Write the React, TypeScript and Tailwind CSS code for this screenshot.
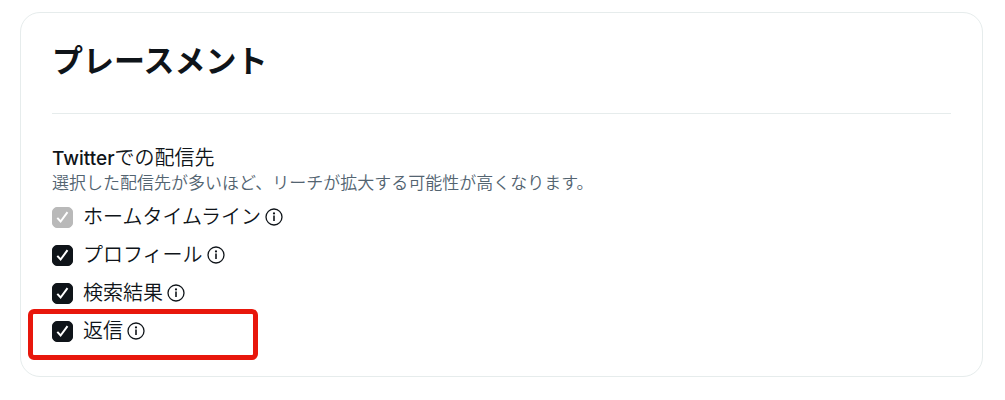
import { useState } from "react";

const placements = [
  { id: "home", label: "ホームタイムライン", locked: true, highlight: false },
  { id: "profile", label: "プロフィール", locked: false, highlight: false },
  { id: "search", label: "検索結果", locked: false, highlight: false },
  { id: "reply", label: "返信", locked: false, highlight: true },
];

function InfoIcon() {
  return (
    <svg viewBox="0 0 18 18" className="size-[18px]" fill="none" aria-hidden="true">
      <circle cx="9" cy="9" r="8" stroke="currentColor" strokeWidth="1.3" />
      <circle cx="9" cy="5.4" r="1.1" fill="currentColor" />
      <path d="M9 7.6v5.4" stroke="currentColor" strokeWidth="1.6" />
    </svg>
  );
}

export default function App() {
  const [checked, setChecked] = useState(["home", "profile", "search", "reply"]);

  const toggle = (id: string) =>
    setChecked((prev) => (prev.includes(id) ? prev.filter((p) => p !== id) : [...prev, id]));

  return (
    <main className="bg-white pt-3 pb-6 pl-5 pr-[22px] font-['Inter','Noto_Sans_CJK_JP',sans-serif] text-[#0f1419]">
      <section className="rounded-[20px] border border-[#e6ecec] px-[31px] py-6 pb-[31px]">
        <h1 className="border-b border-[#e6ecec] pb-7 text-[31px] leading-12 font-bold">プレースメント</h1>

        <div role="group" aria-labelledby="placement-title" className="pt-8">
          <h2 id="placement-title" className="text-xl leading-6 font-[350]">
            <span className="text-[19px] font-medium">Twitter</span>での配信先
          </h2>
          <p className="text-[17px] leading-6 font-[350] text-[#536471]">
            選択した配信先が多いほど、リーチが拡大する可能性が高くなります。
          </p>

          <ul className="mt-2 flex flex-col gap-2.5">
            {placements.map(({ id, label, locked, highlight }) => (
              <li key={id} className="relative flex items-center gap-1">
                <label htmlFor={id} className="flex items-center gap-2.5 text-xl leading-7 font-[350]">
                  <span className="grid size-[21px] place-items-center">
                    <input
                      id={id}
                      type="checkbox"
                      checked={checked.includes(id)}
                      disabled={locked}
                      onChange={() => toggle(id)}
                      className="peer col-start-1 row-start-1 size-[21px] appearance-none rounded-[5px] border border-[#0f1419] checked:bg-[#0f1419] disabled:border-[#b9b9b9] disabled:bg-[#b9b9b9]"
                    />
                    <svg
                      viewBox="0 0 21 21"
                      fill="none"
                      aria-hidden="true"
                      className="pointer-events-none invisible col-start-1 row-start-1 size-[21px] text-white peer-checked:visible"
                    >
                      <path d="M5.3 10.9l3.3 3.6L15.5 5.2" stroke="currentColor" strokeWidth="2" />
                    </svg>
                  </span>
                  {label}
                </label>
                <button type="button" aria-label={`${label}の詳細`}>
                  <InfoIcon />
                </button>
                {highlight && (
                  <span className="pointer-events-none absolute -top-2 -left-6 h-[51px] w-[230px] rounded-md border-5 border-[#e8170c]" />
                )}
              </li>
            ))}
          </ul>
        </div>
      </section>
    </main>
  );
}
